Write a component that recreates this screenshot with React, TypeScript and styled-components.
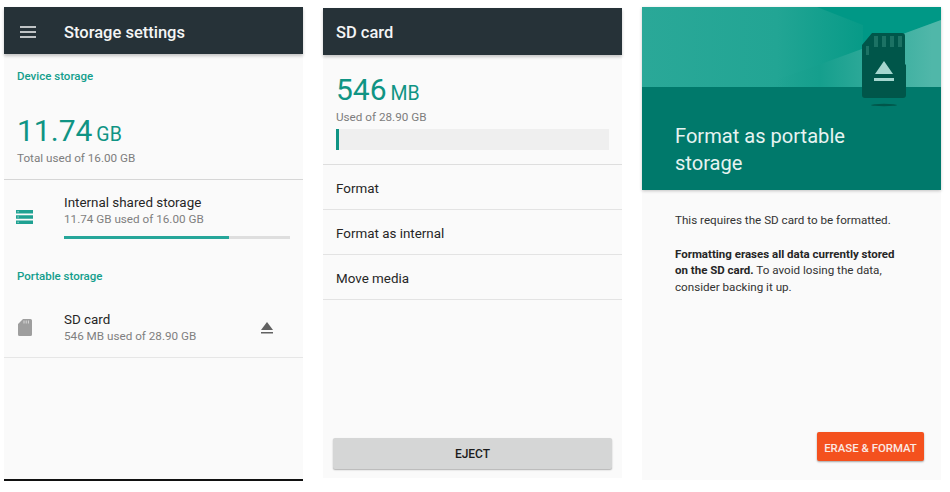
import React from 'react';
import styled, { createGlobalStyle } from 'styled-components';

const Global = createGlobalStyle`
  html, body { margin: 0; padding: 0; background: #fff; }
  body { font-family: Roboto, "Liberation Sans", sans-serif; width: 950px; height: 492px; overflow: hidden; }
`;

const Page = styled.div`
  display: flex;
  align-items: flex-start;
  gap: 20px;
  padding: 7px 0 0 4px;
`;

const Screen = styled.section<{ $h: number; $line?: boolean; $mt?: number }>`
  width: 299px;
  height: ${p => p.$h}px;
  margin-top: ${p => p.$mt ?? 0}px;
  background: #fafafa;
  display: flex;
  flex-direction: column;
  border-bottom: ${p => (p.$line ? '2px solid #111' : 'none')};
  box-sizing: ${p => (p.$line ? 'border-box' : 'content-box')};
`;

const Toolbar = styled.header<{ $pl?: number; $pt?: number }>`
  height: 47px;
  box-sizing: border-box;
  padding: ${p => p.$pt ?? 0}px 0 0 ${p => p.$pl ?? 0}px;
  flex: none;
  background: #263238;
  display: flex;
  align-items: center;
  color: #f4f5f5;
  font-size: 16.5px;
  font-weight: 500;
  box-shadow: 0 2px 3px rgba(0, 0, 0, 0.22);
  position: relative;
`;

const MenuIcon = styled.svg`
  width: 16px;
  height: 12px;
  margin: 0 28px 0 16px;
  flex: none;
`;

const Category = styled.div<{ $mt: number }>`
  margin: ${p => p.$mt}px 0 0 13px;
  color: #139e8c;
  font-size: 11.5px;
  font-weight: 500;
  line-height: 14px;
`;

const Summary = styled.div<{ $mt: number; $pl: number }>`
  margin-top: ${p => p.$mt}px;
  padding-left: ${p => p.$pl}px;
  color: #0f9484;
  line-height: 34px;
  white-space: nowrap;
`;

const BigNumber = styled.span`
  font-size: 30px;
`;

const Unit = styled.span`
  font-size: 19.5px;
  margin-left: 4px;
`;

const Hint = styled.div<{ $pl: number; $mt?: number }>`
  padding-left: ${p => p.$pl}px;
  margin-top: ${p => p.$mt ?? 0}px;
  color: #7d7d7d;
  font-size: 11.7px;
  line-height: 14px;
`;

const Divider = styled.hr<{ $mt: number; $c?: string }>`
  margin: ${p => p.$mt}px 0 0;
  border: 0;
  height: 1px;
  background: ${p => p.$c ?? '#dcdcdc'};
  flex: none;
`;

const StorageRow = styled.div<{ $mt: number }>`
  display: flex;
  align-items: center;
  margin-top: ${p => p.$mt}px;
  position: relative;
`;

const IconSlot = styled.div`
  width: 60px;
  flex: none;
  display: flex;
  justify-content: center;
  padding-right: 19px;
  box-sizing: border-box;
`;

const RowBody = styled.div`
  flex: 1;
  min-width: 0;
`;

const RowTitle = styled.div`
  color: #262626;
  font-size: 13.4px;
  line-height: 16px;
`;

const RowSub = styled.div`
  color: #7f7f7f;
  font-size: 11.7px;
  line-height: 14px;
  margin-top: 1px;
`;

const Meter = styled.div`
  margin: 10px 13px 0 0;
  height: 3px;
  background: #dedede;
`;

const MeterFill = styled.div`
  height: 100%;
  background: #26a69a;
`;

const EjectSlot = styled.div`
  width: 42px;
  flex: none;
  display: flex;
  justify-content: flex-start;
`;

const UsageBar = styled.div`
  margin: 5px 13px 0;
  height: 21px;
  background: #efefef;
`;

const UsageFill = styled.div`
  height: 100%;
  background: #0f9484;
`;

const ActionRow = styled.div`
  height: 42px;
  flex: none;
  border-bottom: 1px solid #e3e3e3;
  display: flex;
  align-items: center;
  padding: 2px 0 0 13px;
  color: #262626;
  font-size: 13.4px;
`;

const Spacer = styled.div`
  flex: 1;
`;

const EjectButton = styled.button`
  margin: 0 10px 9px;
  height: 31px;
  flex: none;
  border: 0;
  border-radius: 2px;
  background: #d5d6d6;
  box-shadow: 0 1px 1.5px rgba(0, 0, 0, 0.3);
  color: #1c1c1c;
  font: 500 12px Roboto, sans-serif;
`;

const Hero = styled.div`
  height: 183px;
  flex: none;
  background: #00796b;
  display: flex;
  flex-direction: column;
  position: relative;
  box-shadow: 0 1px 3px rgba(0, 0, 0, 0.22);
`;

const HeroBand = styled.svg`
  width: 299px;
  height: 80px;
  display: block;
  flex: none;
`;

const HeroCard = styled.svg`
  position: absolute;
  left: 219px;
  top: 26px;
  width: 46px;
  height: 74px;
`;

const HeroTitle = styled.h1`
  margin: 36px 0 0 33px;
  font-size: 20.1px;
  font-weight: 400;
  line-height: 27px;
  color: #e6f3f1;
`;

const Body = styled.div`
  padding: 22px 33px 0;
  color: #333;
  font-size: 11.65px;
  line-height: 16.7px;
`;

const Para = styled.p`
  margin: 0 0 17px;
`;

const Strong = styled.strong`
  font-weight: 700;
  font-size: 11.5px;
  color: #262626;
`;

const Footer = styled.div`
  margin-top: auto;
  padding: 0 17px 19px 0;
  display: flex;
  justify-content: flex-end;
`;

const PrimaryButton = styled.button`
  width: 107px;
  height: 29px;
  border: 0;
  border-radius: 2px;
  background: #f4511e;
  box-shadow: 0 1px 2px rgba(0, 0, 0, 0.35);
  color: #fbe9e3;
  font: 500 11.4px Roboto, sans-serif;
  padding: 2px 0 0;
  white-space: nowrap;
`;

const App = () => (
  <>
    <Global />
    <Page>
      <Screen $h={474} $line>
        <Toolbar $pt={3}>
          <MenuIcon viewBox="0 0 16 12">
            <path d="M0 1h16M0 6h16M0 11h16" stroke="#f2f4f4" strokeWidth="1.6" />
          </MenuIcon>
          <span>Storage settings</span>
        </Toolbar>
        <Category $mt={15}>Device storage</Category>
        <Summary $mt={31} $pl={13}>
          <BigNumber>11.74</BigNumber>
          <Unit>GB</Unit>
        </Summary>
        <Hint $pl={13} $mt={-2}>Total used of 16.00 GB</Hint>
        <Divider $mt={14} $c="#d6d6d6" />
        <StorageRow $mt={15}>
          <IconSlot>
            <svg width="17" height="14" viewBox="0 0 17 14">
              <path d="M0 0h17v3.600H0zM0 5.200h17v3.600H0zM0 10.400h17V14H0z" fill="#1fa192" />
              <path d="M1.500 1.300h1.200v1H1.500zM1.500 6.500h1.200v1H1.500zM1.500 11.700h1.200v1H1.500z" fill="#bfe6e0" />
            </svg>
          </IconSlot>
          <RowBody>
            <RowTitle>Internal shared storage</RowTitle>
            <RowSub>11.74 GB used of 16.00 GB</RowSub>
            <Meter>
              <MeterFill style={{ width: `${(165 / 226) * 100}%` }} />
            </Meter>
          </RowBody>
        </StorageRow>
        <Category $mt={30}>Portable storage</Category>
        <StorageRow $mt={29}>
          <IconSlot>
            <svg width="14" height="17" viewBox="0 0 14 17">
              <path d="M5 0h7.500A1.500 1.500 0 0 1 14 1.500v14a1.500 1.500 0 0 1-1.500 1.500h-11A1.500 1.500 0 0 1 0 15.500V5z" fill="#9e9e9e" />
              <path d="M5.500 1.500h1v3h-1zM7.700 1.500h1v3h-1zM9.900 1.500h1v3h-1z" fill="#d8d8d8" />
            </svg>
          </IconSlot>
          <RowBody>
            <RowTitle>SD card</RowTitle>
            <RowSub>546 MB used of 28.90 GB</RowSub>
          </RowBody>
          <EjectSlot>
            <svg width="12" height="12" viewBox="0 0 12 12">
              <path d="M6 0l6 8H0zM0 10h12v1.600H0z" fill="#616161" />
            </svg>
          </EjectSlot>
        </StorageRow>
        <Divider $mt={14} $c="#e6e6e6" />
      </Screen>

      <Screen $h={470} $mt={1}>
        <Toolbar $pl={13} $pt={1}>
          <span>SD card</span>
        </Toolbar>
        <Summary $mt={18} $pl={13}>
          <BigNumber>546</BigNumber>
          <Unit>MB</Unit>
        </Summary>
        <Hint $pl={13} $mt={-2}>Used of 28.90 GB</Hint>
        <UsageBar>
          <UsageFill style={{ width: 3 }} />
        </UsageBar>
        <Divider $mt={14} $c="#dedede" />
        <ActionRow>Format</ActionRow>
        <ActionRow>Format as internal</ActionRow>
        <ActionRow>Move media</ActionRow>
        <Spacer />
        <EjectButton>EJECT</EjectButton>
      </Screen>

      <Screen $h={473}>
        <Hero>
          <HeroBand viewBox="0 0 299 80">
            <defs>
              <linearGradient id="baseFade" gradientUnits="userSpaceOnUse" x1="0" x2="225" y1="0" y2="0">
                <stop offset="0" stopColor="#2aa898" />
                <stop offset="0.6" stopColor="#22a594" />
                <stop offset="1" stopColor="#069a87" />
              </linearGradient>
              <linearGradient id="lightFade" gradientUnits="userSpaceOnUse" x1="130" x2="290" y1="0" y2="0">
                <stop offset="0" stopColor="#1fa392" stopOpacity="0" />
                <stop offset="0.3" stopColor="#159f8d" />
                <stop offset="1" stopColor="#50b7a9" />
              </linearGradient>
            </defs>
            <rect width="299" height="80" fill="url(#baseFade)" />
            <path d="M175 0H299V13L221 42V18Z" fill="#009886" />
            <path d="M299 13V80H130V74L168 61Z" fill="url(#lightFade)" />
          </HeroBand>
          <HeroCard viewBox="0 0 46 74">
            <path d="M11 0H41A3 3 0 0 1 44 3V31L45 32V62A3 3 0 0 1 42 65H4A3 3 0 0 1 1 62V12Z" fill="#00564a" />
            <path d="M13 3h4v11h-4zM21 3h4v11h-4zM29 3h4v11h-4zM37 3h4v11h-4zM5 13h3v9H5z" fill="#1c7264" />
            <path d="M23 28L32 41H14ZM13 45H33V48H13Z" fill="#a5d6cf" />
            <ellipse cx="23" cy="72" rx="13" ry="1.200" fill="#00564a" />
          </HeroCard>
          <HeroTitle>Format as portable<br />storage</HeroTitle>
        </Hero>
        <Body>
          <Para>This requires the SD card to be formatted.</Para>
          <Para>
            <Strong>Formatting erases all data currently stored on the SD card.</Strong> To avoid losing the data, consider backing it up.
          </Para>
        </Body>
        <Footer>
          <PrimaryButton>ERASE &amp; FORMAT</PrimaryButton>
        </Footer>
      </Screen>
    </Page>
  </>
);

export default App;
